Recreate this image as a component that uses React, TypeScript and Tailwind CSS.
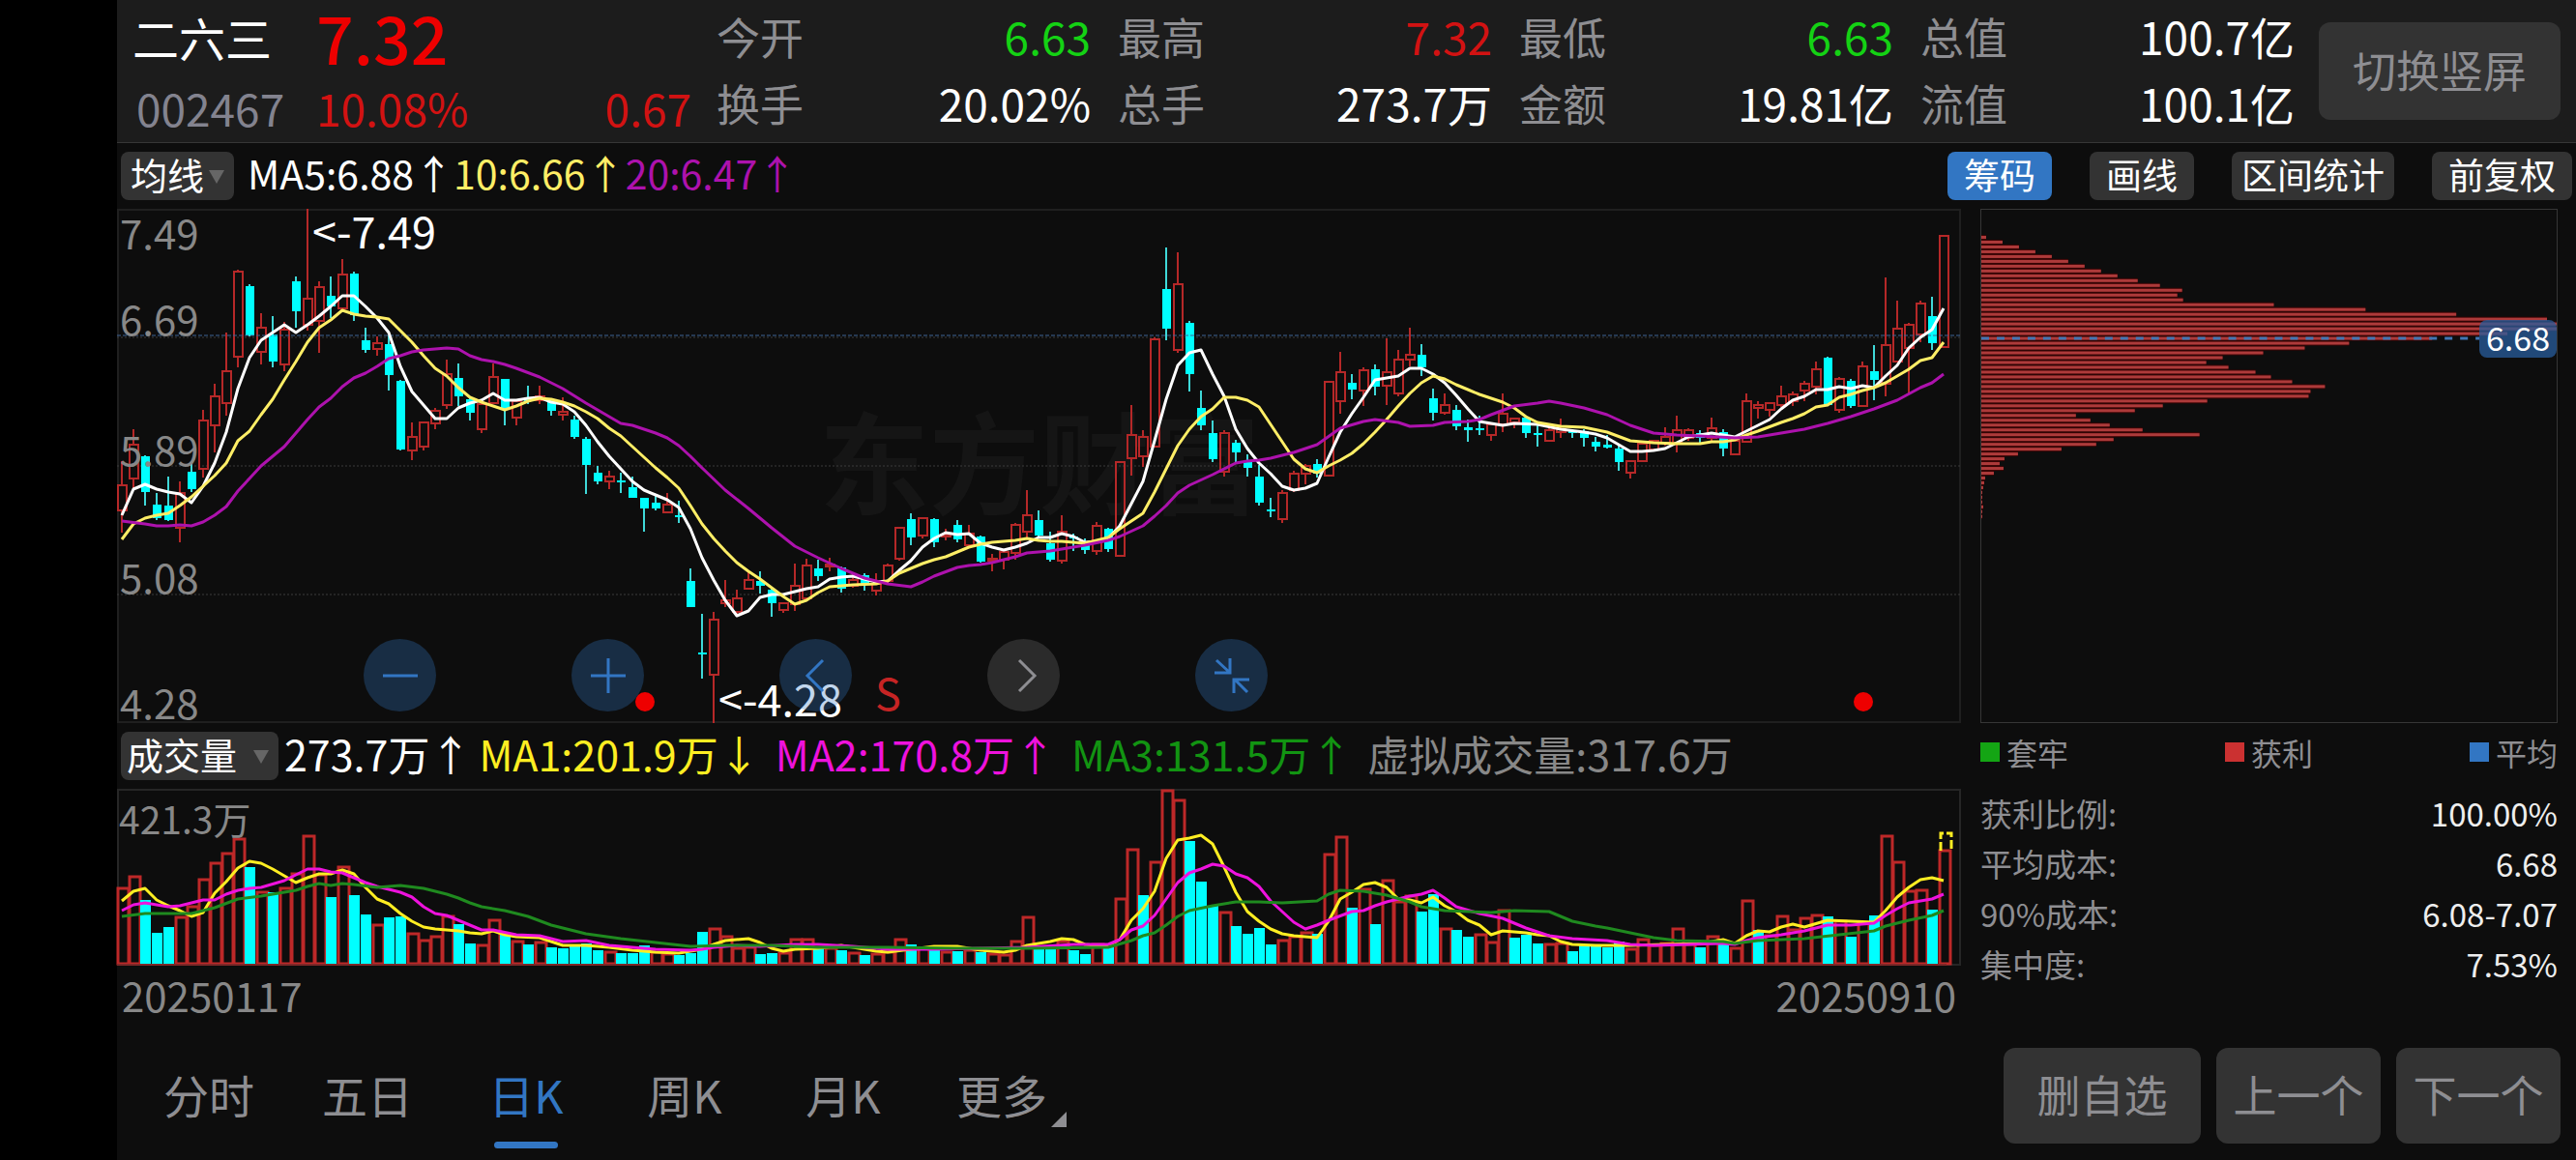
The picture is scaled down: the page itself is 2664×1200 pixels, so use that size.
import React, { useState } from 'react';
import clsx from 'clsx';

interface Quote {
  label: string;
  value: string;
  tone: string;
}

// [rising, high, body top, body bottom, low], heights in chart rows
type Candle = [number, number, number, number, number];
// [index of the day, height in chart rows]
type Point = [number, number];

const quotes: Quote[] = [
  { label: '今开', value: '6.63', tone: 'text-[#14d214]' },
  { label: '最高', value: '7.32', tone: 'text-[#d21212]' },
  { label: '最低', value: '6.63', tone: 'text-[#14d214]' },
  { label: '总值', value: '100.7亿', tone: 'text-white' },
  { label: '换手', value: '20.02%', tone: 'text-white' },
  { label: '总手', value: '273.7万', tone: 'text-white' },
  { label: '金额', value: '19.81亿', tone: 'text-white' },
  { label: '流值', value: '100.1亿', tone: 'text-white' },
];

const tools = [
  { name: '筹码', pad: 'px-[17px]' },
  { name: '画线', pad: 'px-[17px]' },
  { name: '区间统计', pad: 'px-[10px]' },
  { name: '前复权', pad: 'px-[17px]' },
];
const periods = ['分时', '五日', '日K', '周K', '月K', '更多'];

const priceLabels = [
  { text: '7.49', place: 'top-0' },
  { text: '6.69', place: 'top-[89px]' },
  { text: '5.89', place: 'top-[224px]' },
  { text: '5.08', place: 'top-[356px]' },
  { text: '4.28', place: 'top-[486px]' },
];

const costRows = [
  ['获利比例:', '100.00%'],
  ['平均成本:', '6.68'],
  ['90%成本:', '6.08-7.07'],
  ['集中度:', '7.53%'],
];

const legend = [
  { text: '套牢', color: 'bg-[#14a514]' },
  { text: '获利', color: 'bg-[#cb3131]' },
  { text: '平均', color: 'bg-[#3276c3]' },
];

const candles: Candle[] = [
  [1, 477, 502, 528, 551], [1, 444, 460, 495, 506], [0, 471, 472, 509, 523], [0, 510, 522, 536, 538],
  [0, 493, 523, 538, 539], [1, 498, 510, 546, 561], [0, 479, 488, 506, 509], [1, 424, 435, 485, 494],
  [1, 397, 410, 440, 468], [1, 344, 384, 417, 430], [1, 279, 281, 369, 380], [0, 294, 296, 347, 348],
  [1, 324, 339, 364, 377], [0, 327, 346, 374, 380], [1, 333, 341, 377, 384], [0, 286, 291, 322, 339],
  [1, 216, 309, 336, 342], [1, 291, 297, 332, 365], [0, 286, 306, 317, 329], [1, 268, 284, 319, 320],
  [0, 281, 283, 326, 332], [0, 339, 352, 362, 365], [1, 348, 355, 361, 368], [0, 347, 356, 388, 404],
  [0, 393, 394, 465, 466], [1, 437, 452, 466, 476], [1, 436, 437, 462, 466], [1, 422, 425, 438, 444],
  [1, 372, 387, 419, 423], [0, 376, 391, 410, 420], [0, 411, 413, 427, 435], [1, 416, 418, 444, 448],
  [1, 376, 390, 417, 418], [0, 392, 392, 424, 440], [1, 414, 415, 432, 440], [0, 399, 411, 415, 418],
  [1, 399, 410, 414, 418], [0, 413, 414, 425, 430], [1, 411, 426, 429, 435], [0, 430, 434, 452, 454],
  [0, 452, 454, 481, 511], [0, 482, 489, 498, 501], [1, 487, 493, 498, 506], [0, 489, 497, 498, 510],
  [0, 493, 504, 515, 515], [0, 515, 515, 526, 550], [0, 513, 520, 526, 528], [1, 510, 522, 530, 531],
  [0, 518, 533, 534, 541], [0, 588, 601, 628, 628], [0, 635, 675, 677, 702], [1, 633, 641, 698, 748],
  [1, 600, 621, 624, 628], [1, 610, 619, 633, 635], [1, 592, 600, 609, 610], [0, 591, 601, 606, 614],
  [0, 609, 610, 624, 638], [1, 623, 624, 631, 634], [1, 583, 606, 625, 632], [1, 578, 585, 619, 621],
  [0, 579, 588, 596, 601], [1, 577, 584, 586, 591], [0, 586, 587, 609, 613], [1, 593, 600, 606, 608],
  [0, 593, 595, 605, 611], [1, 593, 604, 611, 616], [1, 583, 585, 601, 603], [1, 545, 546, 578, 580],
  [0, 531, 537, 556, 564], [1, 535, 536, 554, 557], [0, 536, 537, 561, 566], [1, 547, 553, 555, 559],
  [0, 538, 543, 558, 561], [1, 543, 552, 564, 566], [0, 554, 555, 581, 582], [1, 573, 578, 580, 591],
  [1, 569, 571, 579, 589], [1, 541, 543, 572, 579], [1, 507, 533, 550, 557], [0, 528, 538, 554, 556],
  [0, 550, 562, 579, 581], [1, 533, 550, 580, 583], [0, 552, 555, 557, 570], [0, 557, 561, 569, 573],
  [1, 540, 544, 570, 574], [0, 546, 547, 568, 571], [1, 478, 478, 575, 576], [1, 419, 450, 474, 492],
  [1, 445, 452, 472, 483], [1, 349, 351, 462, 463], [0, 256, 299, 340, 352], [1, 261, 294, 362, 365],
  [0, 332, 334, 387, 405], [0, 404, 422, 440, 445], [0, 435, 448, 475, 478], [1, 445, 448, 488, 493],
  [0, 455, 458, 468, 478], [0, 470, 477, 484, 493], [0, 481, 493, 520, 523], [0, 515, 527, 529, 535],
  [1, 507, 510, 537, 541], [1, 487, 490, 507, 509], [1, 480, 482, 490, 501], [0, 475, 480, 490, 494],
  [1, 395, 395, 492, 493], [1, 364, 385, 415, 428], [0, 387, 396, 403, 413], [1, 380, 383, 404, 420],
  [0, 377, 382, 400, 409], [1, 350, 385, 399, 419], [1, 362, 372, 407, 410], [1, 339, 367, 372, 379],
  [0, 356, 367, 380, 389], [0, 402, 412, 427, 435], [1, 407, 419, 427, 429], [0, 419, 424, 441, 445],
  [0, 434, 442, 445, 457], [0, 430, 443, 445, 450], [1, 437, 439, 450, 456], [1, 407, 428, 439, 447],
  [1, 432, 433, 437, 443], [0, 431, 432, 448, 453], [0, 440, 448, 450, 462], [1, 443, 445, 456, 457],
  [1, 433, 444, 447, 453], [0, 444, 445, 448, 453], [0, 444, 446, 453, 462], [0, 452, 457, 462, 467],
  [0, 450, 460, 463, 464], [0, 461, 464, 478, 487], [1, 476, 477, 489, 495], [1, 458, 459, 477, 478],
  [1, 455, 456, 465, 467], [1, 442, 452, 458, 461], [1, 430, 445, 458, 468], [1, 443, 445, 453, 456],
  [0, 445, 448, 453, 458], [1, 432, 443, 453, 457], [0, 444, 447, 464, 472], [1, 454, 456, 470, 471],
  [1, 407, 415, 457, 458], [1, 415, 419, 422, 433], [1, 416, 417, 424, 431], [1, 399, 410, 419, 421],
  [1, 405, 408, 415, 420], [1, 394, 397, 404, 415], [1, 374, 382, 400, 408], [0, 369, 370, 419, 420],
  [1, 390, 392, 424, 427], [0, 392, 394, 420, 422], [1, 374, 379, 420, 421], [0, 357, 384, 393, 414],
  [1, 287, 357, 397, 410], [1, 311, 340, 374, 375], [1, 334, 336, 360, 407], [1, 311, 314, 346, 354],
  [0, 307, 327, 355, 362], [1, 243, 244, 359, 360],
];

const ma5: Point[] = [
  [0, 533], [1, 506], [2, 501], [3, 506], [4, 509], [5, 511], [6, 520], [7, 503], [8, 479], [9, 447],
  [10, 402], [11, 370], [12, 352], [13, 344], [14, 336], [15, 344], [16, 336], [17, 327], [18, 317],
  [19, 306], [20, 306], [21, 317], [22, 329], [23, 344], [24, 379], [25, 405], [26, 419], [27, 433],
  [28, 433], [29, 422], [30, 417], [31, 414], [32, 407], [33, 414], [34, 414], [35, 412], [36, 411],
  [37, 416], [38, 418], [39, 426], [40, 440], [41, 457], [42, 472], [43, 485], [44, 498], [45, 507],
  [46, 512], [47, 517], [48, 525], [49, 547], [50, 577], [51, 600], [52, 621], [53, 637], [54, 632],
  [55, 618], [56, 615], [57, 615], [58, 612], [59, 609], [60, 607], [61, 599], [62, 597], [63, 596],
  [64, 599], [65, 602], [66, 601], [67, 590], [68, 580], [69, 566], [70, 557], [71, 551], [72, 553],
  [73, 552], [74, 562], [75, 566], [76, 569], [77, 566], [78, 562], [79, 556], [80, 556], [81, 552],
  [82, 555], [83, 561], [84, 560], [85, 557], [86, 544], [87, 521], [88, 498], [89, 456], [90, 413],
  [91, 378], [92, 365], [93, 362], [94, 387], [95, 410], [96, 444], [97, 464], [98, 479], [99, 490],
  [100, 503], [101, 507], [102, 505], [103, 500], [104, 473], [105, 447], [106, 428], [107, 411],
  [108, 393], [109, 391], [110, 389], [111, 381], [112, 381], [113, 387], [114, 396], [115, 409],
  [116, 423], [117, 436], [118, 438], [119, 440], [120, 438], [122, 439], [124, 444], [126, 447],
  [127, 449], [128, 453], [129, 460], [130, 467], [131, 467], [132, 466], [133, 464], [134, 458],
  [135, 452], [136, 450], [137, 448], [138, 450], [139, 452], [140, 446], [141, 440], [142, 434],
  [143, 423], [144, 414], [145, 410], [146, 403], [147, 403], [148, 400], [149, 402], [150, 399],
  [151, 401], [152, 389], [153, 378], [154, 360], [155, 349], [156, 341], [157, 319],
];

const ma10: Point[] = [
  [0, 558], [1, 542], [2, 536], [3, 533], [4, 531], [5, 523], [6, 514], [7, 503], [8, 492], [9, 479],
  [10, 456], [11, 446], [12, 429], [13, 413], [14, 393], [15, 374], [16, 354], [17, 339], [18, 331],
  [19, 321], [20, 325], [21, 327], [22, 328], [23, 330], [24, 342], [25, 354], [26, 368], [27, 381],
  [28, 389], [29, 401], [30, 411], [31, 416], [32, 420], [33, 424], [34, 420], [35, 415], [36, 412],
  [37, 413], [38, 416], [39, 420], [40, 426], [41, 433], [42, 443], [43, 451], [44, 462], [45, 473],
  [46, 484], [47, 494], [48, 505], [49, 523], [50, 542], [51, 557], [52, 570], [53, 582], [54, 591],
  [55, 599], [56, 608], [57, 617], [58, 625], [59, 621], [60, 613], [61, 607], [62, 606], [63, 605],
  [65, 604], [66, 601], [67, 593], [68, 588], [69, 583], [70, 579], [71, 576], [72, 571], [73, 566],
  [74, 563], [75, 561], [76, 560], [77, 559], [78, 557], [79, 559], [80, 560], [81, 560], [83, 562],
  [84, 559], [85, 556], [86, 547], [87, 539], [88, 531], [89, 509], [90, 485], [91, 461], [92, 444],
  [93, 431], [94, 423], [95, 411], [96, 411], [97, 414], [98, 421], [99, 439], [100, 457], [101, 475],
  [102, 485], [103, 489], [104, 482], [105, 476], [106, 469], [107, 459], [108, 447], [109, 434],
  [110, 420], [111, 407], [112, 396], [113, 389], [114, 392], [115, 398], [116, 403], [117, 408],
  [118, 412], [119, 416], [120, 422], [121, 431], [122, 437], [124, 441], [126, 442], [128, 447],
  [130, 456], [132, 458], [134, 459], [136, 459], [137, 457], [138, 457], [139, 455], [140, 450],
  [141, 446], [143, 437], [144, 433], [145, 428], [146, 421], [147, 419], [148, 411], [149, 408],
  [150, 404], [151, 401], [152, 396], [153, 389], [154, 382], [155, 373], [156, 370], [157, 354],
];

const ma20: Point[] = [
  [0, 539], [2, 542], [3, 544], [4, 544], [5, 543], [6, 544], [7, 540], [8, 533], [9, 524], [10, 508],
  [11, 495], [12, 482], [13, 472], [14, 462], [15, 448], [16, 434], [17, 421], [18, 412], [19, 400],
  [20, 391], [21, 386], [22, 379], [23, 371], [24, 368], [25, 364], [26, 362], [28, 360], [29, 361],
  [30, 368], [31, 372], [32, 374], [33, 377], [34, 381], [36, 390], [38, 402], [40, 417], [41, 424],
  [42, 431], [43, 438], [44, 440], [45, 444], [46, 448], [47, 453], [48, 461], [49, 472], [50, 484],
  [52, 507], [54, 526], [56, 546], [58, 565], [60, 577], [62, 588], [64, 598], [66, 604], [68, 607],
  [69, 602], [70, 596], [72, 587], [73, 585], [74, 584], [75, 582], [76, 579], [77, 576], [78, 572],
  [80, 570], [81, 568], [83, 564], [85, 559], [86, 555], [88, 544], [89, 534], [90, 523], [91, 510],
  [92, 502], [94, 491], [96, 479], [97, 477], [98, 476], [99, 474], [101, 468], [103, 460], [105, 443],
  [107, 436], [108, 434], [110, 437], [111, 441], [113, 440], [114, 437], [116, 436], [117, 434],
  [118, 429], [120, 420], [122, 417], [123, 415], [124, 417], [126, 422], [128, 429], [130, 440],
  [131, 444], [132, 448], [134, 450], [136, 451], [139, 453], [141, 452], [143, 448], [145, 444],
  [147, 438], [149, 431], [151, 423], [153, 414], [155, 401], [156, 396], [157, 387],
];

// [rising, bar top]
const volumes: Point[] = [
  [1, 919], [1, 907], [0, 931], [0, 965], [0, 959], [1, 949], [1, 938], [1, 910], [1, 893], [1, 883],
  [1, 868], [0, 897], [1, 923], [0, 923], [1, 919], [1, 904], [1, 865], [1, 905], [0, 928], [1, 897],
  [0, 926], [0, 946], [1, 957], [0, 949], [0, 948], [1, 966], [1, 973], [1, 969], [1, 948], [0, 956],
  [0, 976], [1, 978], [1, 952], [0, 967], [1, 974], [0, 977], [1, 975], [0, 980], [0, 981], [0, 978],
  [0, 976], [0, 983], [1, 985], [0, 986], [0, 986], [0, 978], [1, 985], [1, 987], [0, 988], [0, 986],
  [0, 964], [1, 961], [1, 969], [1, 981], [1, 980], [0, 987], [0, 986], [1, 986], [1, 972], [1, 972],
  [0, 981], [1, 981], [0, 983], [1, 986], [0, 988], [1, 987], [1, 985], [1, 972], [0, 977], [1, 981],
  [0, 983], [1, 985], [0, 984], [1, 983], [0, 985], [1, 987], [1, 988], [1, 974], [1, 949], [0, 980],
  [0, 982], [1, 974], [0, 983], [0, 987], [1, 977], [0, 980], [1, 930], [1, 879], [0, 926], [1, 892],
  [1, 818], [1, 828], [0, 870], [0, 912], [0, 937], [1, 944], [0, 958], [0, 966], [0, 960], [0, 977],
  [1, 973], [1, 969], [1, 965], [0, 966], [1, 884], [1, 866], [0, 939], [1, 920], [0, 956], [1, 911],
  [1, 933], [1, 927], [0, 943], [0, 925], [1, 961], [0, 962], [0, 969], [1, 967], [1, 975], [1, 942],
  [0, 970], [0, 967], [0, 976], [1, 977], [1, 976], [0, 984], [0, 978], [0, 978], [0, 980], [0, 974],
  [1, 982], [1, 972], [1, 978], [1, 976], [1, 961], [1, 977], [0, 980], [1, 969], [0, 977], [1, 981],
  [1, 932], [0, 962], [1, 968], [1, 948], [1, 962], [1, 950], [1, 947], [0, 948], [1, 953], [0, 969],
  [1, 955], [0, 947], [1, 865], [1, 892], [1, 922], [1, 921], [0, 941], [1, 880],
];

const volMa1: Point[] = [
  [0, 932], [1, 922], [2, 919], [3, 931], [4, 937], [5, 942], [6, 948], [7, 944], [8, 924], [9, 912],
  [10, 898], [11, 891], [12, 893], [13, 899], [14, 906], [15, 913], [16, 908], [17, 904], [18, 904],
  [19, 900], [20, 904], [21, 918], [22, 930], [23, 935], [24, 945], [25, 953], [26, 959], [27, 961],
  [28, 962], [29, 963], [30, 965], [31, 966], [32, 963], [33, 967], [34, 969], [36, 970], [38, 978],
  [40, 978], [42, 980], [44, 983], [46, 985], [48, 986], [50, 982], [51, 977], [52, 973], [54, 971],
  [55, 975], [56, 981], [57, 984], [58, 982], [60, 981], [62, 978], [63, 980], [65, 984], [66, 985],
  [68, 982], [70, 979], [72, 979], [74, 983], [76, 985], [77, 983], [78, 978], [79, 976], [80, 974],
  [81, 971], [82, 972], [83, 977], [84, 978], [85, 978], [86, 972], [87, 952], [88, 940], [89, 922],
  [90, 888], [91, 869], [92, 867], [93, 864], [94, 873], [95, 897], [96, 923], [97, 943], [98, 953],
  [99, 961], [100, 966], [101, 968], [102, 969], [103, 970], [104, 953], [105, 930], [106, 923],
  [107, 915], [108, 913], [109, 918], [110, 930], [111, 931], [112, 934], [113, 928], [114, 937],
  [115, 943], [116, 952], [117, 957], [118, 967], [119, 963], [121, 965], [122, 967], [123, 968],
  [124, 974], [125, 977], [127, 978], [130, 978], [133, 977], [136, 976], [138, 972], [139, 976],
  [140, 968], [141, 963], [142, 964], [143, 959], [144, 956], [145, 959], [147, 952], [149, 953],
  [151, 954], [152, 942], [153, 928], [154, 918], [155, 910], [156, 908], [157, 911],
];

const volMa2: Point[] = [
  [0, 942], [1, 936], [2, 934], [4, 938], [5, 937], [6, 934], [7, 931], [8, 931], [9, 925], [10, 921],
  [11, 919], [12, 918], [14, 911], [16, 899], [17, 899], [18, 902], [19, 903], [20, 908], [21, 913],
  [22, 917], [24, 923], [25, 928], [26, 938], [27, 945], [28, 947], [30, 957], [31, 962], [32, 962],
  [34, 967], [36, 968], [38, 974], [40, 973], [42, 978], [44, 980], [46, 982], [49, 983], [50, 982],
  [51, 980], [53, 978], [55, 979], [58, 977], [60, 977], [63, 979], [66, 982], [70, 982], [74, 981],
  [78, 980], [82, 977], [85, 977], [86, 972], [87, 962], [88, 958], [89, 947], [90, 930], [91, 913],
  [92, 903], [93, 899], [94, 894], [95, 896], [96, 904], [97, 908], [98, 917], [99, 932], [100, 943],
  [101, 954], [102, 961], [103, 957], [104, 952], [106, 943], [107, 942], [108, 937], [109, 933],
  [110, 930], [111, 927], [112, 925], [113, 921], [114, 929], [115, 938], [117, 945], [119, 950],
  [121, 960], [123, 968], [125, 971], [128, 973], [130, 977], [132, 978], [135, 977], [138, 976],
  [139, 977], [140, 973], [141, 970], [143, 967], [145, 963], [147, 957], [149, 957], [151, 955],
  [152, 947], [153, 940], [154, 934], [155, 932], [156, 930], [157, 925],
];

const volMa3: Point[] = [
  [0, 948], [2, 945], [6, 945], [8, 939], [10, 930], [12, 927], [14, 923], [15, 921], [16, 917],
  [17, 914], [18, 916], [19, 914], [20, 915], [22, 918], [24, 916], [26, 919], [28, 925], [29, 929],
  [30, 934], [31, 938], [33, 942], [35, 948], [37, 957], [38, 960], [40, 966], [43, 971], [46, 975],
  [49, 979], [52, 978], [56, 978], [60, 980], [66, 980], [72, 981], [78, 981], [85, 980], [87, 973],
  [88, 968], [89, 965], [90, 957], [91, 948], [92, 942], [94, 937], [96, 933], [98, 933], [100, 934],
  [103, 932], [104, 925], [105, 921], [107, 922], [109, 926], [111, 933], [112, 938], [114, 942],
  [118, 944], [120, 942], [123, 943], [125, 953], [127, 958], [128, 960], [130, 965], [132, 970],
  [134, 973], [138, 974], [139, 976], [141, 973], [145, 971], [148, 967], [151, 963], [152, 958],
  [154, 952], [156, 947], [157, 942],
];

// Length of each price level's bar, from the top level down
const chips = [
  5, 22, 39, 56, 73, 90, 107, 124, 141, 162, 185, 208, 203, 209, 303, 398, 492, 586, 596, 596, 545, 467,
  381, 335, 292, 250, 233, 256, 284, 300, 322, 356, 341, 339, 234, 188, 159, 98, 113, 133, 167, 226, 137,
  119, 83, 38, 24, 19, 23, 13, 4, 3, 2, 1, 1, 1, 2, 1, 1,
];

const xOf = (i: number) => 5 + i * 12;
const toPoints = (line: Point[]) => line.map(([i, y]) => `${xOf(i)},${y}`).join(' ');

const Line: React.FC<{ data: Point[]; color: string }> = ({ data, color }) => (
  <polyline points={toPoints(data)} fill="none" stroke={color} strokeWidth="3" strokeLinejoin="round" />
);

const CandleMark: React.FC<{ candle: Candle; x: number }> = ({ candle, x }) => {
  const [up, high, top, bottom, low] = candle;
  return (
    <g>
      <path d={`M${x} ${high}V${top}M${x} ${bottom}V${low}`} stroke={up ? '#b52828' : '#3fd8d8'} strokeWidth="2" />
      {up ? (
        <rect x={x - 4} y={top} width="9" height={Math.max(bottom - top, 1)} fill="none" stroke="#b52828" strokeWidth="2" />
      ) : (
        <rect x={x - 4} y={top} width="9" height={Math.max(bottom - top, 2)} fill="#00ffff" />
      )}
    </g>
  );
};

const PriceChart: React.FC = () => (
  <svg
    className="absolute inset-0 h-full w-full overflow-visible"
    viewBox="2 218 1903 528"
    preserveAspectRatio="none"
    role="img"
    aria-label="日K"
  >
    <g stroke="#3c3c3c" strokeWidth="1" strokeDasharray="2 2">
      <line x1="0" x2="1907" y1="349" y2="349" />
      <line x1="0" x2="1907" y1="482" y2="482" />
      <line x1="0" x2="1907" y1="615" y2="615" />
    </g>
    {candles.map((candle, i) => (
      <CandleMark key={i} candle={candle} x={xOf(i)} />
    ))}
    <line x1="0" x2="1907" y1="347" y2="347" stroke="#3f6596" strokeWidth="1" strokeDasharray="4 2" />
    <Line data={ma5} color="#ffffff" />
    <Line data={ma10} color="#ffee66" />
    <Line data={ma20} color="#ad12ad" />
    <circle cx="546" cy="726" r="10" fill="#ee0000" />
    <circle cx="1806" cy="726" r="10" fill="#ee0000" />
  </svg>
);

const VolumeChart: React.FC = () => (
  <svg
    className="absolute inset-0 h-full w-full overflow-visible"
    viewBox="2 818 1903 179"
    preserveAspectRatio="none"
    role="img"
    aria-label="成交量"
  >
    {volumes.map(([up, top], i) =>
      up ? (
        <rect key={i} x={xOf(i) - 4} y={top} width="11" height={997 - top} fill="none" stroke="#bd2828" strokeWidth="3" />
      ) : (
        <rect key={i} x={xOf(i) - 5} y={top} width="11" height={997 - top} fill="#00ffff" />
      )
    )}
    <line x1="0" x2="1892" y1="998" y2="998" stroke="#7d2828" strokeWidth="2" />
    <path d="M1886 880V862H1897V880" fill="none" stroke="#ffee22" strokeWidth="3" strokeDasharray="9 3" />
    <Line data={volMa1} color="#ffee22" />
    <Line data={volMa2} color="#ee12dd" />
    <Line data={volMa3} color="#1f8a1f" />
  </svg>
);

const ChipChart: React.FC = () => (
  <svg className="absolute inset-0 h-full w-full" viewBox="0 217 596 530" preserveAspectRatio="none" role="img" aria-label="筹码">
    {chips.map((width, i) => (
      <g key={i}>
        <rect x="0" y={243 + i * 4.98} width={width} height="5" fill="#3a0505" />
        <rect x="0" y={244 + i * 4.98} width={width} height="3" fill="#ad3a3a" />
      </g>
    ))}
    <line x1="0" x2="516" y1="350" y2="350" stroke="#4176b4" strokeWidth="3" strokeDasharray="8 8" />
  </svg>
);

const IndicatorSelect: React.FC<{ label: string; option: string; size: string }> = ({ label, option, size }) => (
  <div className="relative">
    <select
      aria-label={label}
      className={clsx('block h-[50px] appearance-none rounded-lg bg-[#333333] pb-1 text-[38px] leading-[46px] text-white', size)}
    >
      <option>{option}</option>
    </select>
    <svg className="pointer-events-none absolute top-[19px] right-[10px]" width="16" height="14" viewBox="0 0 16 14">
      <path d="M0 0h16L8 14z" fill="#666666" />
    </svg>
  </div>
);

const RoundButton: React.FC<{ label: string; muted?: boolean; d: string }> = ({ label, muted, d }) => (
  <button
    aria-label={label}
    className={clsx(
      'flex size-[75px] items-center justify-center rounded-full',
      muted ? 'bg-[#2b2b2b] text-[#8e8e92]' : 'bg-[#3276c3]/30 text-[#3276c3]'
    )}
  >
    <svg width="40" height="40" viewBox="0 0 40 40" fill="none" stroke="currentColor" strokeWidth="3">
      <path d={d} />
    </svg>
  </button>
);

export default function App() {
  const [tool, setTool] = useState('筹码');
  const [period, setPeriod] = useState('日K');

  return (
    <div className="min-h-screen bg-black pl-[121px] font-['Noto_Sans_CJK_SC',sans-serif]">
      <div className="flex min-h-screen flex-col bg-[#0d0d0d]">
        {/* Quote header */}
        <header className="flex h-[148px] items-center border-b border-[#363636] bg-[#1c1c1c] pr-4 pl-4">
          <div className="w-[190px]">
            <h1 className="text-[48px] leading-[74px] text-white">二六三</h1>
            <p className="pl-1 text-[46px] leading-[72px] text-[#83838f]">002467</p>
          </div>
          <div className="w-[388px]">
            <p className="text-[68px] leading-[74px] font-medium text-[#ee0000]">7.32</p>
            <p className="flex justify-between text-[46px] leading-[72px] text-[#d21212]">
              <span>10.08%</span>
              <span>0.67</span>
            </p>
          </div>
          <dl className="ml-[26px] grid flex-1 grid-cols-4 gap-x-[28px] pb-1">
            {quotes.map((quote) => (
              <div key={quote.label} className="flex justify-between text-[45px] leading-[69px]">
                <dt className="text-[#8e8e92]">{quote.label}</dt>
                <dd className={clsx('text-[46px]', quote.tone)}>{quote.value}</dd>
              </div>
            ))}
          </dl>
          <button className="ml-[25px] h-[101px] w-[250px] rounded-xl bg-[#333333] pb-1 text-[45px] text-[#8e8e92]">
            切换竖屏
          </button>
        </header>

        {/* Indicator bar */}
        <div className="flex h-[68px] items-center justify-between pr-1 pl-1">
          <div className="flex items-center text-[41px]">
            <IndicatorSelect label="均线指标" option="均线" size="w-[117px] pl-[10px]" />
            <p className="flex pb-[6px] pl-[14px]">
              <span className="text-white">MA5:6.88↑</span>
              <span className="text-[#ffee66]">10:6.66↑</span>
              <span className="text-[#ad12ad]">20:6.47↑</span>
            </p>
          </div>
          <div className="flex gap-[39px]">
            {tools.map(({ name, pad }) => (
              <button
                key={name}
                onClick={() => setTool(name)}
                className={clsx(
                  'h-[50px] rounded-lg pb-1 text-[37px] leading-[46px] text-white',
                  pad,
                  tool === name ? 'bg-[#3276c3]' : 'bg-[#333333]'
                )}
              >
                {name}
              </button>
            ))}
          </div>
        </div>

        <div className="flex pr-[19px]">
          {/* Price and volume */}
          <main className="flex-1">
            <section className="relative h-[532px] border-2 border-[#1f1f1f]">
              <div className="absolute top-[176px] left-[724px] text-[114px] leading-[160px] font-bold text-[#151515]">东方财富</div>
              <PriceChart />
              {priceLabels.map(({ text, place }) => (
                <span key={text} className={clsx('absolute left-px text-[42px] leading-[44px] text-[#888888]', place)}>
                  {text}
                </span>
              ))}
              <span className="absolute top-0 left-[200px] text-[45px] leading-[40px] text-white">&lt;-7.49</span>
              <span className="absolute top-[482px] left-[620px] text-[45px] leading-[44px] text-white">&lt;-4.28</span>
              <span className="absolute top-[476px] left-[782px] text-[45px] leading-[44px] text-[#c62424]">S</span>
              <div className="absolute top-[443px] left-[253px] flex gap-[140px]">
                <RoundButton label="缩小" d="M2 20H38" />
                <RoundButton label="放大" d="M2 20H38M20 2V38" />
                <RoundButton label="左移" d="M27 4L11 20L27 36" />
                <RoundButton label="右移" muted d="M15 4L31 20L15 36" />
                <RoundButton label="收起" d="M4 4L17 16M2 17H18V2M36 37L24 25M22 38V24H38" />
              </div>
            </section>

            <div className="flex h-[68px] items-center pl-1 text-[43px] whitespace-nowrap">
              <IndicatorSelect label="副图指标" option="成交量" size="w-[163px] pl-[6px]" />
              <p className="flex gap-[16px] pb-[6px] pl-[6px]">
                <span className="-mr-2 text-white">273.7万↑</span>
                <span className="text-[#ffee22]">MA1:201.9万↓</span>
                <span className="text-[#ee12dd]">MA2:170.8万↑</span>
                <span className="text-[#129412]">MA3:131.5万↑</span>
                <span className="text-[#888888]">虚拟成交量:317.6万</span>
              </p>
            </div>

            <section className="relative h-[183px] border-2 border-[#262626]">
              <VolumeChart />
              <span className="absolute top-[6px] left-0 text-[39px] leading-[44px] text-[#888888]">421.3万</span>
            </section>
            <div className="flex justify-between px-[5px] pb-2 text-[42px] leading-[60px] text-[#888888]">
              <time dateTime="2025-01-17">20250117</time>
              <time dateTime="2025-09-10">20250910</time>
            </div>
          </main>

          {/* Chip distribution */}
          <aside className="ml-[20px] w-[597px]">
            <section className="relative h-[532px] border border-[#363636]">
              <ChipChart />
              <span className="absolute top-[114px] right-0 rounded-lg bg-[#285e9e]/75 px-[7px] pb-1 text-[34px] leading-[35px] text-white">
                6.68
              </span>
            </section>
            <ul className="mt-[6px] flex justify-between text-[32px] leading-[48px] text-[#8e8e92]">
              {legend.map(({ text, color }) => (
                <li key={text} className="flex items-center gap-[7px]">
                  <i className={clsx('size-[20px]', color)} />
                  {text}
                </li>
              ))}
            </ul>
            <table className="mt-[13px] w-full text-[33px] leading-[52px]">
              <tbody>
                {costRows.map(([label, value]) => (
                  <tr key={label}>
                    <th scope="row" className="text-left font-normal text-[#8e8e92]">{label}</th>
                    <td className="text-right text-[#eeeeee]">{value}</td>
                  </tr>
                ))}
              </tbody>
            </table>
          </aside>
        </div>

        {/* Periods and actions */}
        <footer className="flex flex-1 items-center justify-between pr-[16px] pl-[13px]">
          <nav className="flex">
            {periods.map((name) => (
              <button
                key={name}
                onClick={() => setPeriod(name)}
                className={clsx(
                  'relative h-[100px] w-[164px] pb-1 text-[47px] leading-[96px]',
                  period === name ? 'text-[#3276c3]' : 'text-[#8e8e92]'
                )}
              >
                {name}
                {period === name && <span className="absolute -bottom-1 left-[49px] h-[7px] w-[66px] rounded-full bg-[#3276c3]" />}
                {name === '更多' && (
                  <svg className="absolute right-[15px] bottom-[18px]" width="16" height="16" viewBox="0 0 16 16">
                    <path d="M16 0V16H0z" fill="#8e8e92" />
                  </svg>
                )}
              </button>
            ))}
          </nav>
          <div className="flex gap-[16px] text-[45px] leading-[95px] text-[#8e8e92]">
            <button className="h-[99px] w-[204px] rounded-xl bg-[#333333] pb-1">删自选</button>
            <button className="h-[99px] w-[170px] rounded-xl bg-[#333333] pb-1">上一个</button>
            <button className="h-[99px] w-[170px] rounded-xl bg-[#333333] pb-1">下一个</button>
          </div>
        </footer>
      </div>
    </div>
  );
}
